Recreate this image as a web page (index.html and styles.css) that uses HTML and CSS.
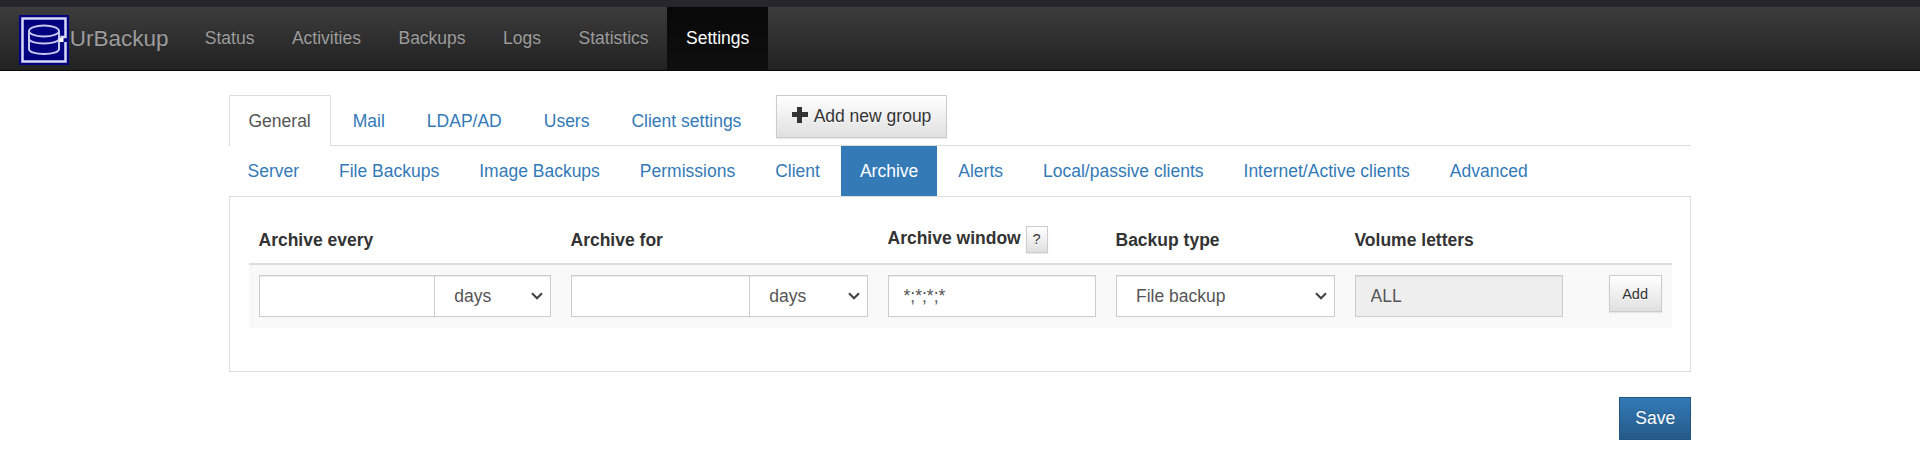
FILE: index.html
```html
<!DOCTYPE html>
<html>
    <head>
        <title>UrBackup - Settings</title>
        <link rel="stylesheet" href="styles.css">
    </head>
    <body>
        <nav class="navbar">
            <a class="brand" href="#">
                <svg class="logo" viewBox="0 0 50 50">
                    <rect width="50" height="50" fill="#000080"/>
                    <path d="M40 24.500H42.500V22H46.500V3.500H3.500V46.500H46.500V27" fill="none" stroke="#d8d8f8" stroke-width="2.500"/>
                    <ellipse cx="25" cy="16" rx="15" ry="5.500" fill="none" stroke="#c8c8ee" stroke-width="2"/>
                    <path d="M10 16V34C10 37 16.500 39 25 39C33.500 39 40 37 40 34V16M10 23.500C10 26.500 16.500 28.500 25 28.500C33.500 28.500 40 26.500 40 23.500" fill="none" stroke="#c8c8ee" stroke-width="2"/>
                    <rect x="40.500" y="23" width="4" height="4" fill="#fff"/>
                </svg>
                <span>UrBackup</span>
            </a>
            <ul class="nav-links">
                <li><a href="#">Status</a></li>
                <li><a href="#">Activities</a></li>
                <li><a href="#">Backups</a></li>
                <li><a href="#">Logs</a></li>
                <li><a href="#">Statistics</a></li>
                <li class="active"><a href="#">Settings</a></li>
            </ul>
        </nav>
        <div class="container">
            <div class="tabs-row">
                <ul class="tabs">
                    <li class="active"><a href="#">General</a></li>
                    <li><a href="#">Mail</a></li>
                    <li><a href="#">LDAP/AD</a></li>
                    <li><a href="#">Users</a></li>
                    <li><a href="#">Client settings</a></li>
                </ul>
                <button class="btn add-group"><span class="plus"></span>Add new group</button>
            </div>
            <ul class="pills">
                <li><a href="#">Server</a></li>
                <li><a href="#">File Backups</a></li>
                <li><a href="#">Image Backups</a></li>
                <li><a href="#">Permissions</a></li>
                <li><a href="#">Client</a></li>
                <li class="active"><a href="#">Archive</a></li>
                <li><a href="#">Alerts</a></li>
                <li><a href="#">Local/passive clients</a></li>
                <li><a href="#">Internet/Active clients</a></li>
                <li><a href="#">Advanced</a></li>
            </ul>
            <div class="panel">
                <table class="archive">
                    <colgroup>
                        <col class="col-every">
                        <col class="col-for">
                        <col class="col-window">
                        <col class="col-type">
                        <col class="col-letters">
                        <col>
                    </colgroup>
                    <thead>
                        <tr>
                            <th>Archive every</th>
                            <th>Archive for</th>
                            <th class="with-help">Archive window <button class="btn help">?</button></th>
                            <th>Backup type</th>
                            <th>Volume letters</th>
                            <th></th>
                        </tr>
                    </thead>
                    <tbody>
                        <tr>
                            <td>
                                <div class="input-group">
                                    <input class="field" type="text">
                                    <select class="field unit"><option>days</option></select>
                                </div>
                            </td>
                            <td>
                                <div class="input-group">
                                    <input class="field" type="text">
                                    <select class="field unit"><option>days</option></select>
                                </div>
                            </td>
                            <td><input class="field" type="text" value="*;*;*;*"></td>
                            <td><select class="field"><option>File backup</option></select></td>
                            <td><input class="field" type="text" value="ALL" disabled></td>
                            <td class="add-cell"><button class="btn add">Add</button></td>
                        </tr>
                    </tbody>
                </table>
            </div>
            <div class="actions">
                <button class="btn primary">Save</button>
            </div>
        </div>
    </body>
</html>
```

FILE: styles.css
```css
* {
    box-sizing: border-box;
}
html, body {
    margin: 0;
    padding: 0;
}
body {
    background: #fff;
    color: #333;
    font-family: "Liberation Sans", Arial, sans-serif;
    font-size: 17.5px;
    line-height: 25px;
    padding-top: 7px;
    background-image: linear-gradient(#26262c, #26262c);
    background-repeat: no-repeat;
    background-size: 100% 7px;
}
ul {
    list-style: none;
    margin: 0;
    padding: 0;
}
a {
    color: #337ab7;
    text-decoration: none;
}

.navbar {
    display: flex;
    height: 64px;
    border-bottom: 1px solid #080808;
    background: linear-gradient(#3c3c3c, #222);
}
.brand {
    display: flex;
    align-items: center;
    padding: 0 17.5px 0 18.75px;
    color: #9d9d9d;
    font-size: 22.5px;
    text-shadow: 0 -1px 0 rgba(0,0,0,0.25);
}
.logo {
    width: 50px;
    height: 50px;
    margin-top: 2px;
    margin-right: 1px;
}
.nav-links {
    display: flex;
}
.nav-links a {
    display: block;
    height: 63px;
    padding: 18.75px 18.75px;
    color: #9d9d9d;
    text-shadow: 0 -1px 0 rgba(0,0,0,0.25);
}
.nav-links .active a {
    color: #fff;
    background: linear-gradient(#080808, #0f0f0f);
}

.container {
    width: 1462.5px;
    margin: 0 auto;
    padding-top: 24px;
}
.tabs-row {
    display: flex;
    align-items: flex-start;
    border-bottom: 1px solid #ddd;
    height: 51px;
}
.tabs {
    display: flex;
}
.tabs li {
    margin-right: 2.5px;
}
.tabs a {
    display: block;
    height: 51px;
    padding: 12.5px 18.75px;
    border: 1px solid transparent;
    border-bottom: 0;
}
.tabs .active a {
    color: #555;
    background: #fff;
    border-color: #ddd;
}
.btn {
    display: inline-block;
    padding: 7.5px 15px;
    border: 1px solid #ccc;
    border-radius: 0;
    color: #333;
    background: linear-gradient(#fff, #e0e0e0);
    font-family: inherit;
    font-size: 17.5px;
    font-weight: normal;
    line-height: 25px;
    text-shadow: 0 1px 0 #fff;
    box-shadow: 0 1px 1px rgba(0,0,0,0.075);
}
.add-group {
    margin-left: 12px;
    height: 42.5px;
    white-space: nowrap;
}
.plus {
    display: inline-block;
    position: relative;
    width: 17.5px;
    height: 16px;
    margin-right: 4.5px;
    top: 1px;
    background:
        linear-gradient(#333, #333) left center / 16px 5px no-repeat,
        linear-gradient(#333, #333) 5.5px center / 5px 16px no-repeat;
}
.pills {
    display: flex;
    height: 50px;
}
.pills li {
    margin-right: 2.5px;
}
.pills a {
    display: block;
    height: 50px;
    padding: 12.5px 18.75px;
}
.pills .active a {
    color: #fff;
    background: #337ab7;
}
.panel {
    height: 176px;
    padding: 18.75px;
    border: 1px solid #ddd;
}
.archive {
    width: 100%;
    table-layout: fixed;
    border-collapse: collapse;
}
.col-every {
    width: 312px;
}
.col-for {
    width: 317px;
}
.col-window {
    width: 228px;
}
.col-type {
    width: 239px;
}
.col-letters {
    width: 228.5px;
}
th {
    height: 47px;
    padding: 10px;
    border-bottom: 2px solid #ddd;
    text-align: left;
    vertical-align: bottom;
    font-weight: bold;
    white-space: nowrap;
}
td {
    padding: 10px 10px 11px;
    background: #f9f9f9;
    vertical-align: top;
}
.input-group {
    display: flex;
}
.input-group .field:first-child {
    flex: 1;
    min-width: 0;
}
.field {
    display: block;
    width: 100%;
    height: 42.5px;
    padding: 7.5px 15px;
    border: 1px solid #ccc;
    border-radius: 0;
    color: #555;
    background: #fff;
    font-family: inherit;
    font-size: 17.5px;
    line-height: 25px;
    box-shadow: inset 0 1px 1px rgba(0,0,0,0.075);
}
select.field {
    appearance: none;
    padding-left: 19.5px;
    background: #fff url("data:image/svg+xml,%3Csvg xmlns='http://www.w3.org/2000/svg' width='12' height='8'%3E%3Cpath d='M1 1.200 6 6.200 11 1.200' fill='none' stroke='%23444' stroke-width='2.200'/%3E%3C/svg%3E") no-repeat right 6.5px center;
}
.field:disabled {
    background: #eee;
    opacity: 1;
}
.input-group .unit {
    width: 40%;
    margin-left: -1px;
    flex: none;
}
.help {
    padding: 0 6px;
    height: 27px;
    font-size: 14.5px;
    line-height: 25px;
    vertical-align: middle;
}
.add-cell {
    text-align: right;
}
.add {
    padding: 6px 12.5px;
    height: 37.5px;
    font-size: 14.5px;
    line-height: 22px;
    vertical-align: top;
}
.actions {
    display: flex;
    justify-content: flex-end;
    padding-top: 25px;
}
.primary {
    width: 72px;
    height: 42.5px;
    color: #fff;
    border-color: #245580;
    background: linear-gradient(#337ab7, #265a88);
    text-shadow: 0 -1px 0 rgba(0,0,0,0.2);
}
```
